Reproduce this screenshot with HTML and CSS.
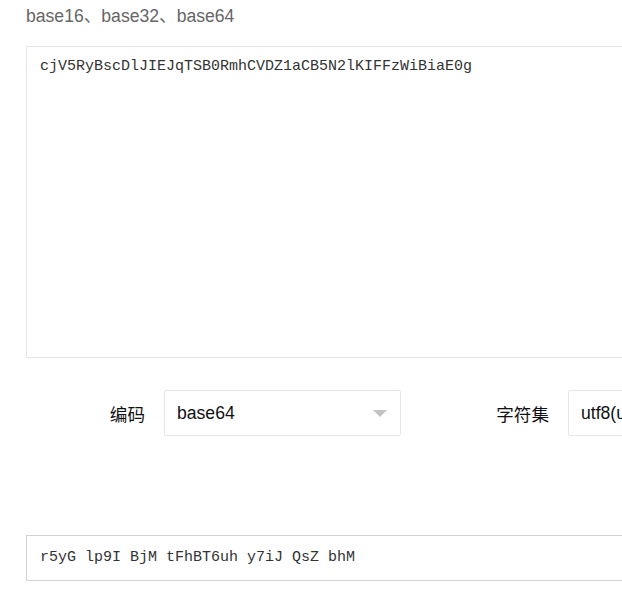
FILE: index.html
```html
<!DOCTYPE html>
<html>
<head>
	<meta charset="utf-8">
	<title>base16、base32、base64</title>
	<link rel="stylesheet" href="styles.css">
</head>
<body>
	<div class="page">
		<!--标题-->
		<h2 class="title">base16、base32、base64</h2>
		<!--输入框-->
		<div class="textarea">cjV5RyBscDlJIEJqTSB0RmhCVDZ1aCB5N2lKIFFzWiBiaE0g</div>
		<!--选项-->
		<div class="form-row">
			<label class="form-label">编码</label>
			<div class="select">
				<span class="select-value">base64</span>
				<i class="select-arrow"></i>
			</div>
			<label class="form-label">字符集</label>
			<div class="select">
				<span class="select-value">utf8(unicode)</span>
				<i class="select-arrow"></i>
			</div>
		</div>
		<!--结果-->
		<div class="result">r5yG lp9I BjM tFhBT6uh y7iJ QsZ bhM</div>
	</div>
</body>
</html>
```

FILE: styles.css
```css
* {
	margin: 0;
	padding: 0;
	box-sizing: border-box;
}

html,
body {
	overflow: hidden;
	background-color: #fff;
}

body {
	font-family: "Liberation Sans", "Noto Sans CJK SC", sans-serif;
	color: #333;
}

.page {
	width: 900px;
	padding-left: 26px;
}

.title {
	margin-top: 6px;
	height: 20px;
	line-height: 20px;
	font-size: 17.6px;
	font-weight: normal;
	color: #666;
}

.textarea {
	margin-top: 20px;
	width: 760px;
	height: 312px;
	padding: 10px 13px;
	line-height: 20px;
	border: 1px solid #e6e6e6;
	border-radius: 2px;
	font-family: "Liberation Mono", "Noto Sans CJK SC", monospace;
	font-size: 15px;
	color: #333;
}

.form-row {
	display: flex;
	align-items: center;
	margin-top: 32px;
	height: 46px;
}

.form-label {
	width: 138px;
	padding-right: 19px;
	text-align: right;
	font-family: "Noto Sans CJK SC", sans-serif;
	font-size: 17.6px;
	color: #111;
}

.form-label + .select + .form-label {
	margin-left: 29px;
}

.select {
	position: relative;
	width: 237px;
	height: 46px;
	padding-left: 12px;
	border: 1px solid #e6e6e6;
	border-radius: 2px;
	display: flex;
	align-items: center;
	font-size: 17.6px;
	color: #111;
}

.select-arrow {
	position: absolute;
	right: 13px;
	top: 19px;
	width: 0;
	height: 0;
	border-left: 7px solid transparent;
	border-right: 7px solid transparent;
	border-top: 7px solid #c2c2c2;
}

.result {
	margin-top: 99px;
	width: 760px;
	height: 46px;
	padding: 0 13px;
	line-height: 44px;
	border: 1px solid #d2d2d2;
	font-family: "Liberation Mono", "Noto Sans CJK SC", monospace;
	font-size: 15px;
	color: #333;
}
```
